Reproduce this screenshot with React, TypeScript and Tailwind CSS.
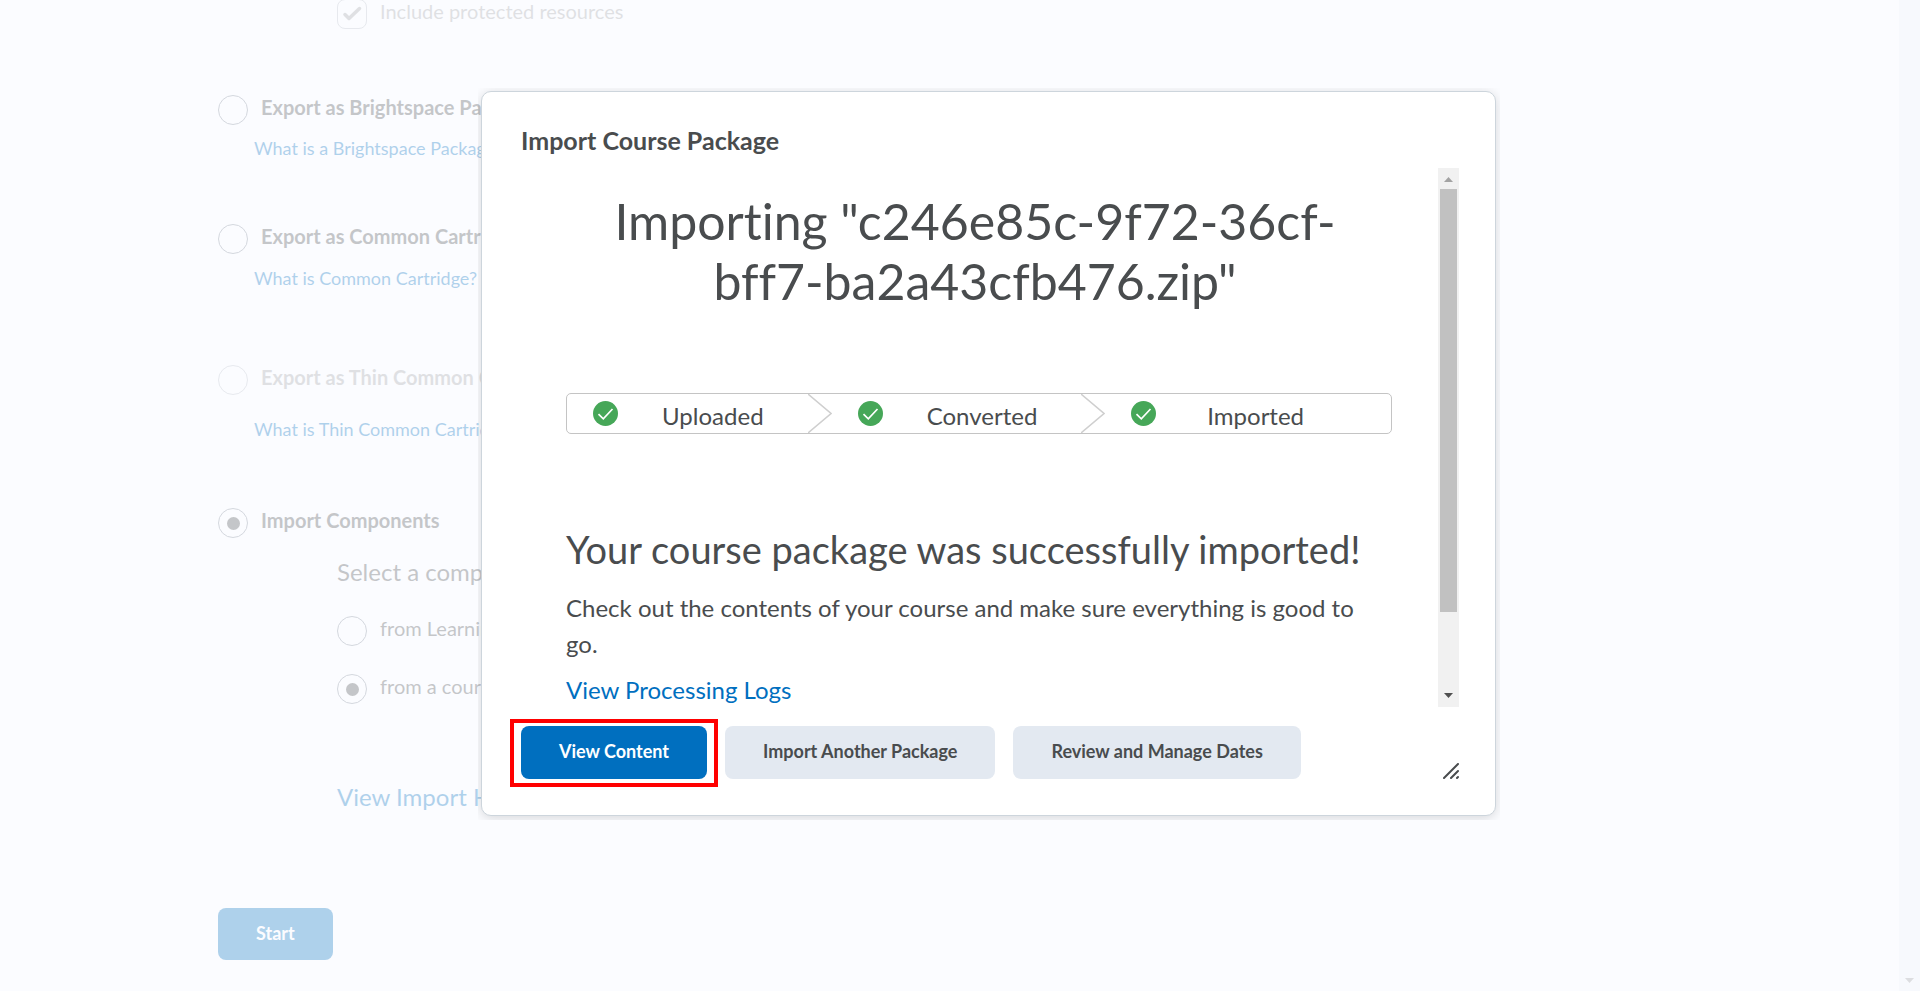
import { ReactNode, useState } from 'react';

type RadioProps = {
  name: string;
  label: string;
  checked: boolean;
  onChange: () => void;
  bold?: boolean;
  disabled?: boolean;
};

function Radio({ name, label, checked, onChange, bold, disabled }: RadioProps) {
  return (
    <label className={`flex items-start gap-[13px] ${disabled ? 'opacity-50' : ''}`}>
      <input
        type="radio"
        name={name}
        checked={checked}
        onChange={onChange}
        disabled={disabled}
        className="grid size-[30px] shrink-0 appearance-none place-content-center rounded-full border border-[#7c8695] checked:before:size-[13px] checked:before:rounded-full checked:before:bg-[#494c4e] checked:before:content-['']"
      />
      <span className={`text-xl leading-6 ${bold ? 'font-bold' : ''}`}>{label}</span>
    </label>
  );
}

function HelpLink({ className, children }: { className: string; children: ReactNode }) {
  return (
    <a href="#help" className={`ml-9 block w-max text-lg leading-6 text-[#006fbf] ${className}`}>
      {children}
    </a>
  );
}

function Arrow({ down, className }: { down?: boolean; className: string }) {
  return (
    <svg viewBox="0 0 9 5" className={`h-[5px] w-[9px] ${className}`} fill="currentColor" aria-hidden="true">
      <path d={down ? 'M0 0h9L4.5 5z' : 'M0 5h9L4.5 0z'} />
    </svg>
  );
}

function Step({ label, last }: { label: string; last?: boolean }) {
  return (
    <li className={`flex items-center pl-[26px] ${last ? 'pr-9' : ''}`}>
      <svg viewBox="0 0 25 25" className="size-[25px] shrink-0" aria-hidden="true">
        <circle cx="12.5" cy="12.5" r="12.5" fill="#46a758" />
        <path d="M5.5 13.2l4.8 4.6L19.5 8" fill="none" stroke="#fff" strokeWidth="1.7" />
      </svg>
      <span className="flex-1 pt-1 text-center text-2xl leading-8">{label}</span>
      {!last && (
        <svg viewBox="0 0 24 39" className="h-[39px] w-6 shrink-0" aria-hidden="true">
          <path d="M0 0l23 19.5L0 39" fill="none" stroke="#cfcfcf" strokeWidth="1.5" />
        </svg>
      )}
    </li>
  );
}

function ImportDialog() {
  const buttonClass = 'h-[53px] rounded-lg px-[38px] pb-[3px] text-lg font-bold';

  return (
    <div className="w-full max-w-[1022px] overflow-hidden pt-[3px] pr-1 pb-1 pl-[3px]">
      <div
        role="dialog"
        aria-labelledby="dialog-title"
        className="rounded-[10px] border border-[#cdd5dc] bg-white pt-[33px] pr-9 pb-9 pl-[39px] shadow-[0_2px_12px_rgba(0,0,0,0.15)]"
      >
        <h2 id="dialog-title" className="text-[25px] leading-[30px] font-bold">
          Import Course Package
        </h2>

        <div className="mt-[13px] flex h-[539px] overflow-hidden">
          <div className="flex-1 pt-[23px] pr-[46px] pl-[45px]">
            <h1 className="mr-2 text-center text-[50px] leading-[60px]">
              Importing "c246e85c-9f72-36cf-bff7-ba2a43cfb476.zip"
            </h1>

            <ol className="mt-[82px] grid h-[41px] grid-cols-[265fr_274fr_286fr] rounded-[5px] border border-[#c4c4c4]">
              <Step label="Uploaded" />
              <Step label="Converted" />
              <Step label="Imported" last />
            </ol>

            <h2 className="mt-[92px] text-[38px] leading-[46px] whitespace-nowrap">
              Your course package was successfully imported!
            </h2>
            <p className="mt-[18px] mr-4 text-2xl leading-9">
              Check out the contents of your course and make sure everything is good to go.
            </p>
            <a href="#logs" className="mt-[10px] block w-max text-2xl leading-9 text-[#006fbf]">
              View Processing Logs
            </a>
          </div>

          <div className="flex w-[21px] flex-col items-center bg-[#f1f1f1]">
            <Arrow className="mt-[9px] mb-[7px] text-[#a3a3a3]" />
            <div className="h-[423px] w-[17px] bg-[#c1c1c1]" />
            <Arrow down className="mt-auto mb-[9px] text-[#505050]" />
          </div>
        </div>

        <div className="mt-[19px] flex items-end gap-[18px]">
          <div className="relative">
            <button type="button" className={`${buttonClass} bg-[#006fbf] text-white`}>
              View Content
            </button>
            <div className="pointer-events-none absolute -inset-x-[11px] -top-[7px] -bottom-2 border-4 border-[#ff0000]" />
          </div>
          <button type="button" className={`${buttonClass} bg-[#e3e9f1]`}>
            Import Another Package
          </button>
          <button type="button" className={`${buttonClass} bg-[#e3e9f1]`}>
            Review and Manage Dates
          </button>
          <svg
            viewBox="0 0 16 16"
            className="ml-auto size-4"
            fill="none"
            stroke="#494c4e"
            strokeWidth="2"
            strokeLinecap="round"
            aria-hidden="true"
          >
            <path d="M1 15L15 1M8 15L15 8M14 15l1-1" />
          </svg>
        </div>
      </div>
    </div>
  );
}

export default function App() {
  const [action, setAction] = useState('import');
  const [source, setSource] = useState('package');
  const [includeProtected, setIncludeProtected] = useState(true);

  return (
    <div className="relative flex h-screen overflow-hidden bg-[#fbfcff] font-[Lato,sans-serif] text-[#494c4e] [font-variant-ligatures:none]">
      <main className="-mt-px flex-1 pl-[218px] opacity-30">
        <label className="ml-[119px] flex w-max items-start gap-[13px] opacity-50">
          <span className="relative size-[30px]">
            <input
              type="checkbox"
              checked={includeProtected}
              onChange={e => setIncludeProtected(e.target.checked)}
              disabled
              className="peer block size-[30px] appearance-none rounded-lg border border-[#7c8695]"
            />
            <svg
              viewBox="0 0 30 30"
              className="absolute inset-0 hidden peer-checked:block"
              fill="none"
              stroke="#494c4e"
              strokeWidth="3.5"
              strokeLinecap="round"
              strokeLinejoin="round"
              aria-hidden="true"
            >
              <path d="M8 15.5l4 4L22.5 9.5" />
            </svg>
          </span>
          <span className="text-xl leading-6">Include protected resources</span>
        </label>

        <div className="mt-[66px]">
          <Radio
            name="action"
            label="Export as Brightspace Package"
            bold
            checked={action === 'brightspace'}
            onChange={() => setAction('brightspace')}
          />
          <HelpLink className="mt-[11px]">What is a Brightspace Package?</HelpLink>
        </div>

        <div className="mt-16">
          <Radio
            name="action"
            label="Export as Common Cartridge"
            bold
            checked={action === 'cartridge'}
            onChange={() => setAction('cartridge')}
          />
          <HelpLink className="mt-3">What is Common Cartridge?</HelpLink>
        </div>

        <div className="mt-[75px]">
          <Radio
            name="action"
            label="Export as Thin Common Cartridge"
            bold
            disabled
            checked={action === 'thin'}
            onChange={() => setAction('thin')}
          />
          <HelpLink className="mt-[22px]">What is Thin Common Cartridge?</HelpLink>
        </div>

        <div className="mt-[67px]">
          <Radio
            name="action"
            label="Import Components"
            bold
            checked={action === 'import'}
            onChange={() => setAction('import')}
          />
          <div className="ml-[119px]">
            <p className="mt-[19px] text-2xl leading-[30px]">Select a component</p>
            <div className="mt-[29px] flex flex-col gap-7">
              <Radio
                name="source"
                label="from Learning Object"
                checked={source === 'repository'}
                onChange={() => setSource('repository')}
              />
              <Radio
                name="source"
                label="from a course file"
                checked={source === 'package'}
                onChange={() => setSource('package')}
              />
            </div>
            <a href="#history" className="mt-[78px] block w-max text-2xl leading-[30px] text-[#006fbf]">
              View Import History
            </a>
          </div>
        </div>

        <button
          type="button"
          className="mt-24 h-[52px] rounded-lg bg-[#006fbf] px-[38px] pb-[3px] text-lg font-bold text-white"
        >
          Start
        </button>
      </main>

      <div className="flex w-[21px] flex-col items-center justify-end bg-[#f7f9fd] pb-2">
        <Arrow down className="text-[#dcdde0]" />
      </div>

      <div className="absolute inset-0 flex items-start justify-center pt-[88px] pl-[58px]">
        <ImportDialog />
      </div>
    </div>
  );
}
